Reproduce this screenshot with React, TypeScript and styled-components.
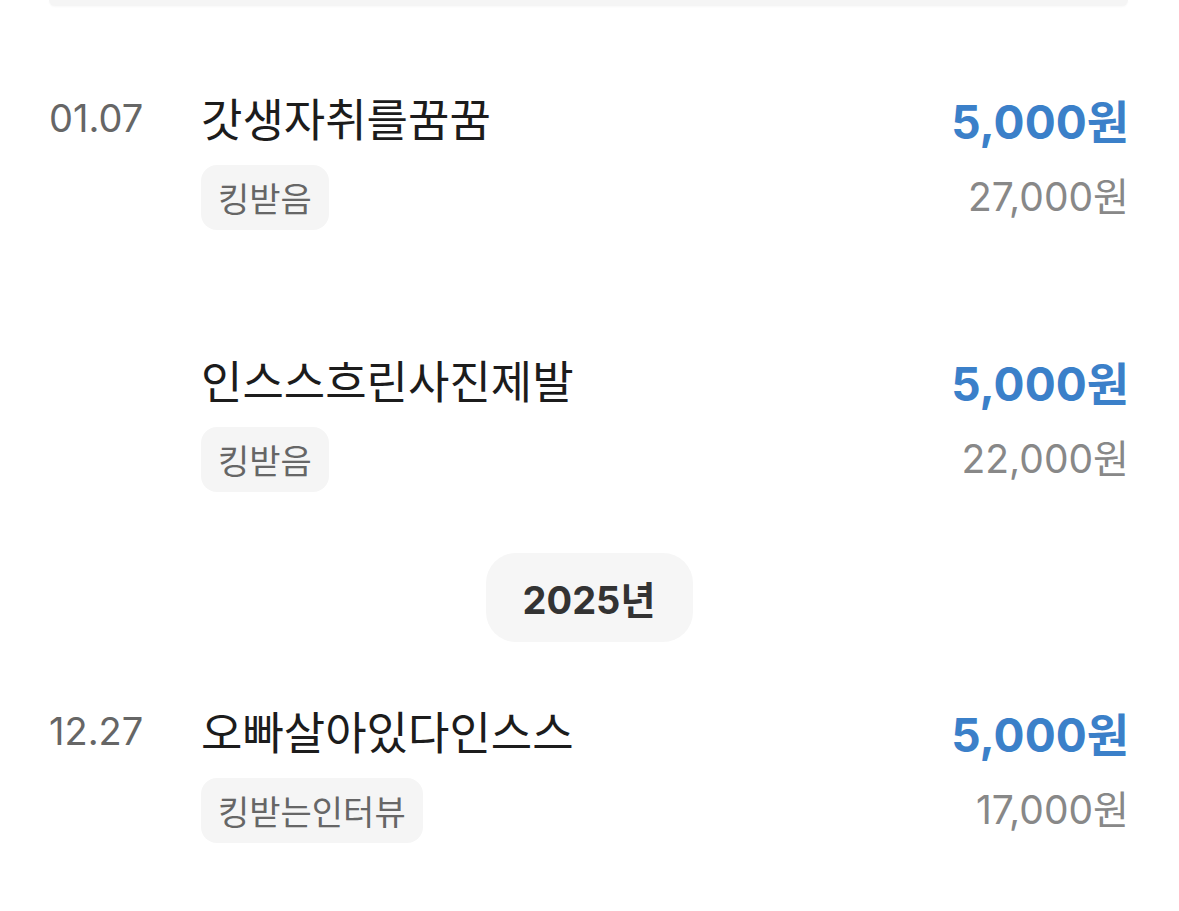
import styled, { createGlobalStyle } from "styled-components"

const GlobalStyle = createGlobalStyle`
  body {
    margin: 0;
    background: #ffffff;
    font-family: Inter, "Noto Sans CJK KR", sans-serif;
  }
`

interface Entry {
  date?: string
  title: string
  tag: string
  amount: number
  total: number
}

type ListRow = { kind: "entry"; entry: Entry } | { kind: "year"; year: number }

const rows: ListRow[] = [
  { kind: "entry", entry: { date: "01.07", title: "갓생자취를꿈꿈", tag: "킹받음", amount: 5000, total: 27000 } },
  { kind: "entry", entry: { title: "인스스흐린사진제발", tag: "킹받음", amount: 5000, total: 22000 } },
  { kind: "year", year: 2025 },
  { kind: "entry", entry: { date: "12.27", title: "오빠살아있다인스스", tag: "킹받는인터뷰", amount: 5000, total: 17000 } },
]

const Page = styled.div`
  width: 1179px;
  height: 911px;
  overflow: hidden;
  padding: 0 50px 0 49px;
  box-sizing: border-box;
`

const SummaryCard = styled.div`
  height: 6px;
  margin-right: 1px;
  background: #f5f5f5;
  border-radius: 0 0 22px 22px;
  box-shadow: 0 1px 2px rgba(0, 0, 0, 0.03);
`

const List = styled.ul`
  list-style: none;
  margin: 23px 0 0;
  padding: 0;
`

const Item = styled.li`
  display: grid;
  grid-template-columns: 152px 1fr auto;
  align-items: start;
  padding: 61px 0;
`

const DateLabel = styled.span`
  font-size: 38px;
  line-height: 56px;
  color: #666666;
`

const Body = styled.div`
  display: flex;
  flex-direction: column;
  align-items: flex-start;
  gap: 19px;
`

const Title = styled.h3`
  margin: 0;
  font-family: "Noto Sans CJK KR", sans-serif;
  font-size: 45px;
  line-height: 56px;
  font-weight: 400;
  color: #1c1c1c;
`

const Tag = styled.span`
  display: inline-flex;
  align-items: center;
  height: 65px;
  padding: 0 17px;
  border-radius: 16px;
  background: #f5f5f5;
  font-family: "Noto Sans CJK KR", sans-serif;
  font-size: 34px;
  color: #666666;
`

const Amounts = styled.div`
  display: flex;
  flex-direction: column;
  align-items: flex-end;
`

const Amount = styled.span`
  font-size: 46px;
  line-height: 64px;
  font-weight: 700;
  color: #3b80c9;
`

const Total = styled.span`
  margin-top: 19px;
  font-size: 39px;
  line-height: 48px;
  color: #888888;
`

const YearRow = styled.li`
  display: flex;
  justify-content: center;
`

const YearPill = styled.span`
  display: inline-flex;
  align-items: center;
  justify-content: center;
  width: 207px;
  height: 89px;
  border-radius: 30px;
  background: #f6f6f6;
  font-size: 38px;
  font-weight: 700;
  color: #333333;
`

const won = (n: number) => `${n.toLocaleString("en-US")}원`

export default function App() {
  return (
    <Page>
      <GlobalStyle />
      <SummaryCard />
      <List>
        {rows.map((row, i) =>
          row.kind === "year" ? (
            <YearRow key={i}>
              <YearPill>{row.year}년</YearPill>
            </YearRow>
          ) : (
            <Item key={i}>
              <DateLabel>{row.entry.date ?? ""}</DateLabel>
              <Body>
                <Title>{row.entry.title}</Title>
                <Tag>{row.entry.tag}</Tag>
              </Body>
              <Amounts>
                <Amount>{won(row.entry.amount)}</Amount>
                <Total>{won(row.entry.total)}</Total>
              </Amounts>
            </Item>
          )
        )}
      </List>
    </Page>
  )
}
